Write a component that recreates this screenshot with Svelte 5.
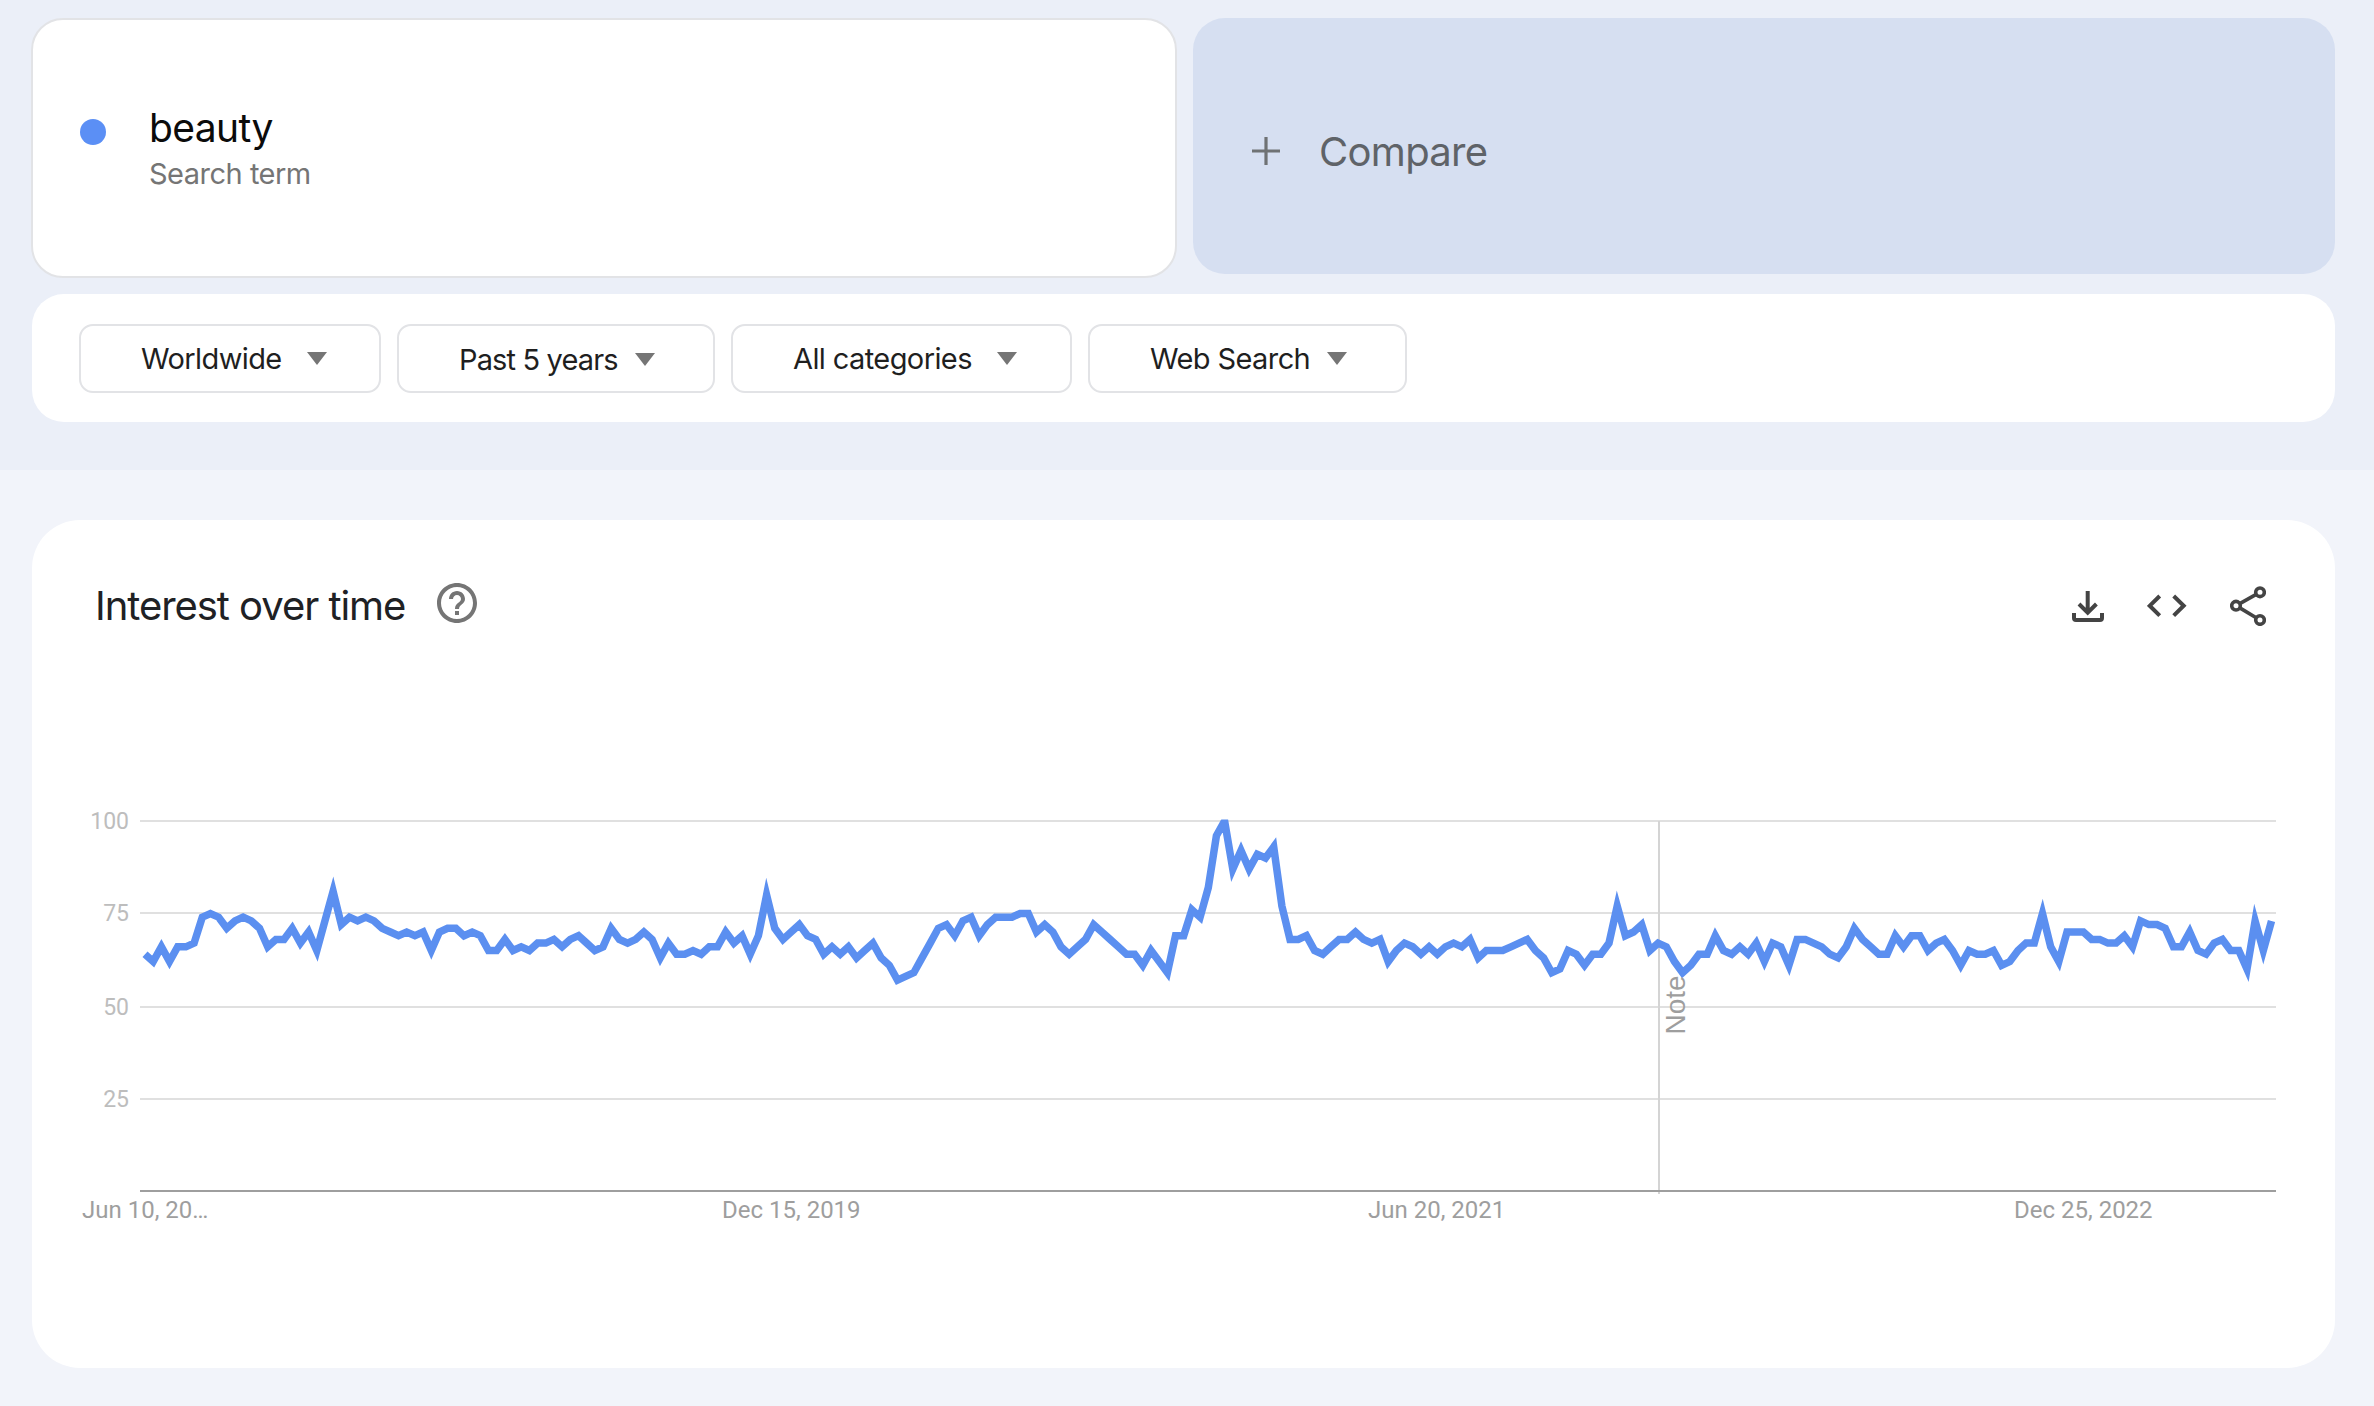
<script lang="ts">
	const dropdowns = [
		{ label: 'Worldwide', width: 302, tight: false, low: false },
		{ label: 'Past 5 years', width: 318, tight: true, low: true },
		{ label: 'All categories', width: 341, tight: false, low: false },
		{ label: 'Web Search', width: 319, tight: true, low: false }
	];

	// weekly interest values, 0-100
	const series = [
		64, 62, 66, 62, 66, 66, 67, 74, 75, 74, 71, 73, 74, 73, 71, 66, 68, 68, 71, 67, 70, 65, 73, 81, 72, 74,
		73, 74, 73, 71, 70, 69, 70, 69, 70, 65, 70, 71, 71, 69, 70, 69, 65, 65, 68, 65, 66, 65, 67, 67, 68, 66,
		68, 69, 67, 65, 66, 71, 68, 67, 68, 70, 68, 63,
		67, 64, 64, 65, 64, 66, 66, 70, 67, 69, 64, 69, 80, 71, 68, 70, 72, 69, 68, 64, 66, 64, 66, 63, 65, 67,
		63, 61, 57, 58, 59, 63, 67, 71, 72, 69, 73, 74, 69, 72, 74, 74, 74, 75, 75, 70, 72, 70, 66, 64, 66, 68,
		72, 70, 68, 66, 64, 64, 61, 65, 62, 59, 69, 69, 76, 74, 82, 96, 100,
		87, 92, 87, 91, 90, 93, 77, 68, 68, 69, 65, 64, 66, 68, 68, 70, 68, 67, 68, 62, 65, 67, 66, 64, 66, 64,
		66, 67, 66, 68, 63, 65, 65, 65, 66, 67, 68, 65, 63, 59, 60, 65, 64, 61, 64, 64, 67, 77, 69, 70, 72, 65,
		67, 66, 62, 59, 61, 64, 64, 69, 65, 64, 66, 64, 67, 62, 67, 66, 61, 68, 68, 67,
		66, 64, 63, 66, 71, 68, 66, 64, 64, 69, 66, 69, 69, 65, 67, 68, 65, 61, 65, 64, 64, 65, 61, 62, 65, 67,
		67, 75, 66, 62, 70, 70, 70, 68, 68, 67, 67, 69, 66, 73, 72, 72, 71, 66, 66, 70, 65, 64, 67, 68, 65, 65,
		60, 73, 65, 73
	];

	const gridLines = [
		{ label: '100', y: 41 },
		{ label: '75', y: 133 },
		{ label: '50', y: 227 },
		{ label: '25', y: 319 }
	];

	const xLabels = [
		{ label: 'Jun 10, 20…', x: 50 },
		{ label: 'Dec 15, 2019', x: 690 },
		{ label: 'Jun 20, 2021', x: 1336 },
		{ label: 'Dec 25, 2022', x: 1982 }
	];

	const points = series
		.map((v, i) => {
			const x = 113 + (i * 2126.5) / (series.length - 1);
			const y = 411 - v * 3.7;
			return `${x.toFixed(1)},${y.toFixed(1)}`;
		})
		.join(' ');
</script>

<main class="page">
	<section class="top">
		<div class="terms">
			<div class="term-card">
				<span class="dot"></span>
				<div class="term-text">
					<div class="term-name">beauty</div>
					<div class="term-kind">Search term</div>
				</div>
			</div>
			<div class="compare">
				<svg class="plus" width="28" height="28" viewBox="0 0 28 28" aria-hidden="true">
					<path d="M0 14h28M14 0v28" stroke="#6f7274" stroke-width="3.2" fill="none" />
				</svg>
				<span>Compare</span>
			</div>
		</div>

		<div class="filters">
			{#each dropdowns as d}
				<button class="dropdown" class:tight={d.tight} class:low={d.low} style="width: {d.width}px">
					<span>{d.label}</span>
					<i class="arrow"></i>
				</button>
			{/each}
		</div>
	</section>

	<section class="bottom">
		<div class="card">
			<header class="card-head">
				<h2>Interest over time</h2>
				<svg class="help" width="48" height="48" viewBox="0 0 24 24" aria-hidden="true">
					<path
						fill="#757575"
						d="M11 18h2v-2h-2v2zm1-16C6.48 2 2 6.48 2 12s4.48 10 10 10 10-4.48 10-10S17.52 2 12 2zm0 18c-4.41 0-8-3.59-8-8s3.59-8 8-8 8 3.59 8 8-3.59 8-8 8zm0-14c-2.21 0-4 1.79-4 4h2c0-1.1.9-2 2-2s2 .9 2 2c0 2-3 1.75-3 5h2c0-2.25 3-2.5 3-5 0-2.21-1.79-4-4-4z"
					/>
				</svg>
				<div class="actions">
					<svg width="32" height="31" viewBox="0 0 32 31" fill="none" stroke="#444" stroke-width="4" aria-label="Download">
						<path d="M15.7 0v20M7 13l8.7 8.7L24.4 13" />
						<path d="M2 22v5a2 2 0 0 0 2 2h24a2 2 0 0 0 2-2v-5" />
					</svg>
					<svg width="40" height="24" viewBox="0 0 40 24" fill="none" stroke="#444" stroke-width="4" aria-label="Embed">
						<path d="M12.7 2 2.7 11.8l10 9.8M26.7 2l10 9.8-10 9.8" />
					</svg>
					<svg width="36" height="40" viewBox="0 0 36 40" fill="none" stroke="#444" stroke-width="3.6" aria-label="Share">
						<circle cx="30" cy="6.3" r="4.3" />
						<circle cx="6" cy="19.7" r="4.3" />
						<circle cx="30" cy="34" r="4.3" />
						<path d="M9.8 17.6 26.2 8.4M9.8 21.9l16.4 9.9" />
					</svg>
				</div>
			</header>

			<svg class="chart" width="2303" height="460" viewBox="0 0 2303 460">
				<defs>
					<clipPath id="plot">
						<rect x="100" y="39.5" width="2150" height="400" />
					</clipPath>
				</defs>
				{#each gridLines as g}
					<line class="grid" x1="108" x2="2244" y1={g.y} y2={g.y} />
					<text class="y-label" x="97" y={g.y + 8}>{g.label}</text>
				{/each}
				<line class="note-line" x1="1627" x2="1627" y1="41" y2="414" />
				<line class="axis" x1="108" x2="2244" y1="411" y2="411" />
				<polyline class="series" points={points} clip-path="url(#plot)" />
				<text class="note" transform="translate(1653 254.5) rotate(-90)">Note</text>
				{#each xLabels as t}
					<text class="x-label" x={t.x} y="438">{t.label}</text>
				{/each}
			</svg>
		</div>
	</section>
</main>

<style>
	:global(body) {
		margin: 0;
		background: #f2f4fa;
	}

	.page {
		font-family: Inter, 'Noto Sans', sans-serif;
		min-height: 1406px;
	}

	.top {
		background: #ebeff8;
		padding: 18px 39px 48px 32px;
	}

	.terms {
		display: grid;
		grid-template-columns: 1143px 1142px;
		gap: 18px;
		align-items: start;
		margin-bottom: 16px;
	}

	.term-card {
		box-sizing: border-box;
		height: 260px;
		margin: 0 -2px 0 -1px;
		background: #fff;
		border: 2px solid #e2e3e6;
		border-radius: 32px;
		display: flex;
		align-items: center;
		padding-left: 47px;
		gap: 43px;
	}

	.dot {
		width: 26px;
		height: 26px;
		margin-bottom: 32px;
		border-radius: 50%;
		background: #5b8ff5;
		flex: none;
	}

	.term-text {
		padding-top: 2px;
	}

	.term-name {
		font-size: 39px;
		line-height: 48px;
		letter-spacing: -0.6px;
		color: #0b0b0b;
	}

	.term-kind {
		margin-top: 2px;
		font-size: 29px;
		line-height: 40px;
		letter-spacing: -0.5px;
		color: #757575;
	}

	.compare {
		box-sizing: border-box;
		height: 256px;
		padding: 11px 0 0 59px;
		background: #d6dff1;
		border-radius: 32px;
		display: flex;
		align-items: center;
		gap: 39px;
		font-size: 40px;
		letter-spacing: -0.7px;
		color: #5f6368;
	}

	.plus {
		margin-top: -1px;
	}

	.filters {
		box-sizing: border-box;
		height: 128px;
		width: 2303px;
		background: #fff;
		border-radius: 32px;
		display: flex;
		align-items: center;
		gap: 16px;
		padding: 0 47px;
	}

	.dropdown {
		box-sizing: border-box;
		height: 69px;
		background: #fff;
		border: 2px solid #e2e3e6;
		border-radius: 14px;
		display: flex;
		align-items: center;
		gap: 25px;
		padding: 0 0 0 60px;
		font: inherit;
		font-size: 29px;
		letter-spacing: -0.6px;
		color: #1f1f1f;
	}

	.dropdown.tight {
		gap: 17px;
	}

	.dropdown.low {
		letter-spacing: -0.85px;
	}

	.dropdown.low span {
		padding-top: 2px;
	}

	.dropdown.low .arrow {
		margin-top: 3px;
	}

	.arrow {
		width: 0;
		height: 0;
		border-left: 10.5px solid transparent;
		border-right: 10.5px solid transparent;
		border-top: 13px solid #757575;
	}

	.bottom {
		padding: 50px 39px 0 32px;
	}

	.card {
		width: 2303px;
		background: #fff;
		border-radius: 48px;
		padding-bottom: 128px;
	}

	.card-head {
		box-sizing: border-box;
		height: 260px;
		display: flex;
		align-items: flex-start;
		padding: 62px 69px 0 63px;
	}

	.card-head h2 {
		margin: 0;
		font-size: 40px;
		font-weight: 400;
		line-height: 48px;
		letter-spacing: -1.05px;
		color: #202124;
	}

	.help {
		margin: -3px 0 0 28px;
	}

	.actions {
		margin: 4px 0 0 auto;
		display: flex;
		align-items: center;
		gap: 43px;
	}

	.chart {
		display: block;
	}

	.grid {
		stroke: #e0e0e0;
		stroke-width: 2;
	}

	.axis {
		stroke: #9e9e9e;
		stroke-width: 2;
	}

	.note-line {
		stroke: #d4d4d4;
		stroke-width: 2;
	}

	.series {
		fill: none;
		stroke: #5b8ff0;
		stroke-width: 7.5;
		stroke-linejoin: miter;
		stroke-miterlimit: 10;
	}

	.y-label {
		font-family: Roboto, sans-serif;
		font-size: 23px;
		text-anchor: end;
		fill: #bdbdbd;
	}

	.x-label {
		font-family: Roboto, sans-serif;
		font-size: 24px;
		fill: #9e9e9e;
	}

	.note {
		font-family: 'Liberation Sans', sans-serif;
		font-size: 28px;
		fill: #9e9e9e;
	}
</style>
